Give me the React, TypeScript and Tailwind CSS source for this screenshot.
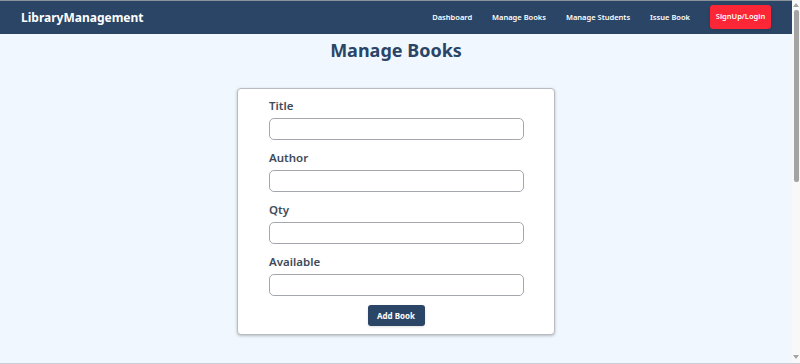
const navLinks = ['Dashboard', 'Manage Books', 'Manage Students', 'Issue Book'];
const fields = ['Title', 'Author', 'Qty', 'Available'];

function Navbar() {
  return (
    <nav className="flex h-[34px] shrink-0 items-center justify-between border-t border-[#8d939b] bg-[#2a4565] pl-[21px] pr-[21px]">
      <span className="text-[12px] font-bold text-white">LibraryManagement</span>
      <div className="flex items-center">
        {navLinks.map((link) => (
          <a key={link} href="#" className="mr-[20px] text-[7.5px] font-semibold text-white">
            {link}
          </a>
        ))}
        <button
          type="button"
          className="mt-[-1px] h-[24px] w-[61px] rounded-[3px] bg-[#fb2636] text-[7.5px] font-semibold text-white shadow">
          SignUp/Login
        </button>
      </div>
    </nav>
  );
}

function BookForm() {
  return (
    <form className="mx-auto mt-[26px] flex w-[318px] flex-col rounded-[4px] border border-[#b8bcc2] bg-white px-[31px] pt-[9px] pb-[8px] shadow-[0_1px_3px_rgba(0,0,0,0.25)]">
      {fields.map((field) => (
        <div key={field} className="mb-[10px] flex flex-col">
          <label className="mb-[4px] text-[11.5px] leading-[16px] font-semibold text-[#3f4b59]">{field}</label>
          <input
            type="text"
            className="h-[22px] w-[255px] rounded-[5px] border border-[#a4a8ad] bg-white outline-none"
          />
        </div>
      ))}
      <button
        type="button"
        className="mx-auto mt-[-1px] h-[21px] w-[57px] rounded-[3px] bg-[#2a4565] text-[8px] font-bold text-white shadow">
        Add Book
      </button>
    </form>
  );
}

// stand-in for the browser's vertical scrollbar seen in the screenshot
function Scrollbar() {
  return (
    <div className="flex w-[8px] shrink-0 flex-col items-center bg-[#f8f8f8]">
      <svg width="6" height="6" viewBox="0 0 6 6" className="mt-[2px]">
        <path d="M3 1 L6 5 L0 5 Z" fill="#a3a3a3" />
      </svg>
      <div className="mt-[2px] h-[172px] w-[5px] rounded-[2px] bg-[#a3a3a3]" />
      <div className="flex-1" />
      <svg width="6" height="6" viewBox="0 0 6 6" className="mb-[3px]">
        <path d="M0 1 L6 1 L3 5 Z" fill="#a3a3a3" />
      </svg>
    </div>
  );
}

export default function App() {
  return (
    <div
      className="flex h-[364px] overflow-hidden border-b border-[#c9ced4] bg-[#f0f7ff]"
      style={{ fontFamily: '"Noto Sans", "Open Sans", sans-serif' }}>
      <main className="flex min-w-0 flex-1 flex-col">
        <Navbar />
        <h1 className="mt-[4px] text-center text-[18px] leading-[24px] font-bold text-[#2a4565]">Manage Books</h1>
        <BookForm />
      </main>
      <Scrollbar />
    </div>
  );
}
